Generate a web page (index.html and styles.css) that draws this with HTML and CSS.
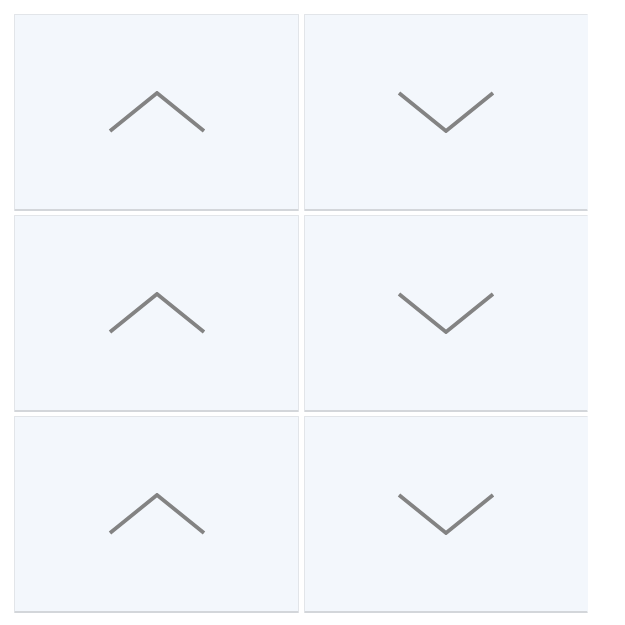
FILE: index.html
```html
<!DOCTYPE html>
<html>
  <head>
    <title>Scroll pad</title>
    <link rel="stylesheet" href="styles.css">
  </head>
  <body>
    <div class="pad">
      <button class="key key-left" aria-label="Up">
        <svg class="chevron" viewBox="0 0 98 42"><polyline points="2,40 49,2 96,40" /></svg>
      </button>
      <button class="key key-right" aria-label="Down">
        <svg class="chevron" viewBox="0 0 98 42"><polyline points="2,2 49,40 96,2" /></svg>
      </button>
      <button class="key key-left" aria-label="Up">
        <svg class="chevron" viewBox="0 0 98 42"><polyline points="2,40 49,2 96,40" /></svg>
      </button>
      <button class="key key-right" aria-label="Down">
        <svg class="chevron" viewBox="0 0 98 42"><polyline points="2,2 49,40 96,2" /></svg>
      </button>
      <button class="key key-left" aria-label="Up">
        <svg class="chevron" viewBox="0 0 98 42"><polyline points="2,40 49,2 96,40" /></svg>
      </button>
      <button class="key key-right" aria-label="Down">
        <svg class="chevron" viewBox="0 0 98 42"><polyline points="2,2 49,40 96,2" /></svg>
      </button>
    </div>
  </body>
</html>
```

FILE: styles.css
```css
body {
  margin: 0;
  padding: 14px 0 0 14px;
  background-color: #fff;
}

.pad {
  display: grid;
  grid-template-columns: 285px 284px;
  grid-auto-rows: 197px;
  column-gap: 5px;
  row-gap: 4px;
}

.key {
  display: flex;
  align-items: center;
  justify-content: center;
  padding: 0;
  background-color: #f3f7fc;
  border: 1px solid #e2e5e9;
  border-bottom: 2px solid #d3d6da;
  border-radius: 1px;
  cursor: pointer;
}

.key-right {
  border-right-color: #f3f7fc;
}

.chevron {
  width: 98px;
  height: 42px;
}

.chevron polyline {
  fill: none;
  stroke: #838383;
  stroke-width: 3.8;
}
```
